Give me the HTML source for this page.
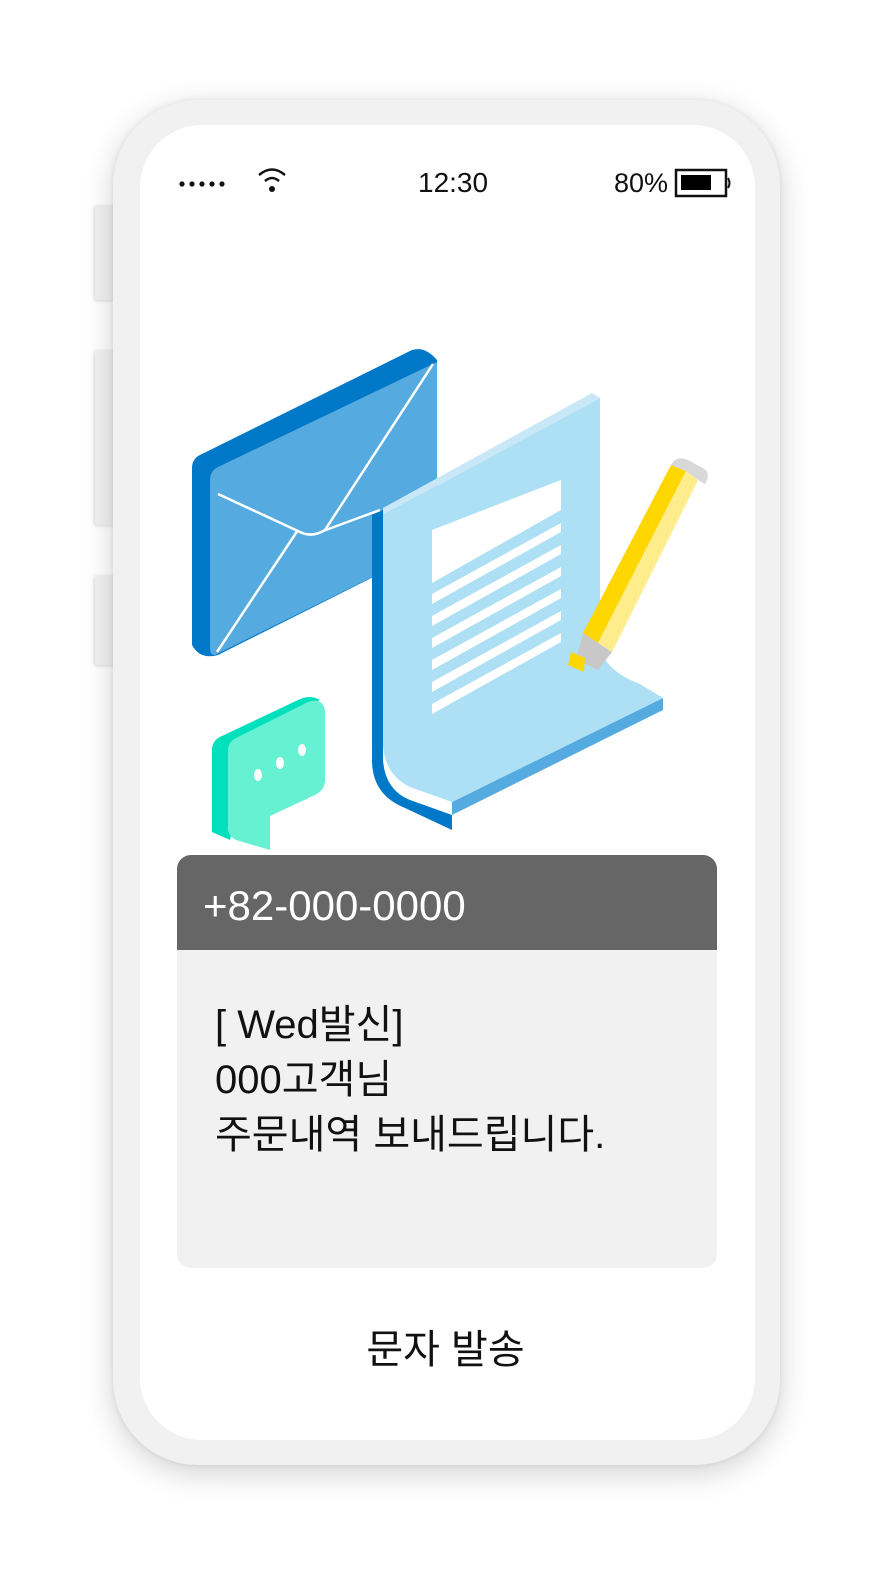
<!DOCTYPE html>
<html><head><meta charset="utf-8"><style>
*{margin:0;padding:0;box-sizing:border-box}
body{width:885px;height:1581px;background:#fff;position:relative;overflow:hidden;font-family:"Liberation Sans","Noto Sans CJK KR",sans-serif}
.abs{position:absolute}
.phone{left:113px;top:100px;width:667px;height:1365px;border-radius:85px;background:#f1f1f1;box-shadow:0 8px 30px rgba(0,0,0,.18),0 0 6px rgba(0,0,0,.08)}
.screen{left:140px;top:125px;width:615px;height:1315px;border-radius:62px;background:#fff}
.btn{left:95px;width:20px;background:#f1f1f1;border-radius:3px 0 0 3px;box-shadow:-1px 1px 3px rgba(0,0,0,.15)}
.t{color:#111}
</style></head><body>
<div class="abs btn" style="top:205px;height:95px"></div>
<div class="abs btn" style="top:350px;height:175px"></div>
<div class="abs btn" style="top:575px;height:90px"></div>
<div class="abs phone"></div>
<div class="abs screen"></div>

<svg class="abs" style="left:175px;top:165px" width="120" height="30">
<g fill="#111"><circle cx="7" cy="19" r="2.6"/><circle cx="17" cy="19" r="2.6"/><circle cx="27" cy="19" r="2.6"/><circle cx="37" cy="19" r="2.6"/><circle cx="47" cy="19" r="2.6"/><circle cx="97" cy="24" r="3"/></g>
<path d="M84 10 Q97 -1 110 10" stroke="#111" stroke-width="2.5" fill="none"/>
<path d="M90 16 Q97 10 104 16" stroke="#111" stroke-width="2.5" fill="none"/>
</svg>
<div class="abs t" style="left:418px;top:168px;font-size:28px;line-height:30px">12:30</div>
<div class="abs t" style="left:614px;top:168px;font-size:27px;line-height:30px">80%</div>
<svg class="abs" style="left:674px;top:168px" width="60" height="30">
<rect x="2" y="2" width="50" height="26" fill="none" stroke="#111" stroke-width="2.5"/>
<rect x="7" y="7" width="30" height="15" fill="#000"/>
<path d="M54 10 Q57 15 54 20" stroke="#111" stroke-width="2" fill="none"/>
</svg>

<svg class="abs" style="left:0;top:0" width="885" height="900">
<path d="M192 468 Q192 458 202 454 L412 350 Q425 346 437 360 L437 545 L218 655 Q200 660 192 645 Z" fill="#0078c8"/>
<path d="M210 480 Q210 470 220 466 L437 362 L437 545 L215 655 Q210 655 210 648 Z" fill="#55aae0"/>
<path d="M218 494 L300 532 Q312 538 325 530 L433 364 M298 530 L217 652 M323 531 L380 510" stroke="#fff" stroke-width="2.5" fill="none"/>
<path d="M372 515 L383 510 L383 760 Q385 790 410 800 L452 815 L452 830 L405 808 Q372 795 372 760 Z" fill="#0078c8"/>
<path d="M452 815 L663 710 L663 698 L452 802 Z" fill="#55aae0"/>
<path d="M383 508 L592 393 L600 398 L383 515 Z" fill="#c8e8f8"/>
<path d="M383 515 L600 398 L600 650 Q608 672 640 684 L663 698 L452 802 L410 787 Q385 775 383 745 Z" fill="#ade0f4"/>
<path d="M432 530 L561 480 L561 510 L432 583 Z" fill="#fff"/>
<g fill="#fff">
<path d="M432 594 L561 523 L561 532 L432 604 Z"/>
<path d="M432 616 L561 545 L561 554 L432 626 Z"/>
<path d="M432 638 L561 567 L561 576 L432 648 Z"/>
<path d="M432 660 L561 589 L561 598 L432 670 Z"/>
<path d="M432 682 L561 611 L561 620 L432 692 Z"/>
<path d="M432 704 L561 633 L561 642 L432 714 Z"/>
</g>
<path d="M583 633 L671 465 L686 471 L598 643 Z" fill="#ffd700"/>
<path d="M598 643 L686 471 L698 480 L612 652 Z" fill="#ffec8c"/>
<path d="M671 465 Q676 455 688 460 L706 470 Q710 476 705 484 L698 480 L686 471 Z" fill="#d8d8d8"/>
<path d="M583 633 L598 643 L612 652 L598 670 L576 660 Z" fill="#c8c8c8"/>
<path d="M571 652 L585 658 L584 672 L568 665 Z" fill="#ffd700"/>
<path d="M212 750 Q212 740 222 736 L298 700 Q310 694 320 700 L255 730 L230 840 L212 832 Z" fill="#00e0bc"/>
<path d="M228 750 Q228 742 236 738 L308 702 Q322 697 325 710 L325 780 Q325 790 315 795 L270 816 L270 850 L236 840 Q228 836 228 828 Z" fill="#66f2d2"/>
<g fill="#fff"><ellipse cx="258" cy="775" rx="4" ry="6"/><ellipse cx="280" cy="763" rx="4" ry="6"/><ellipse cx="302" cy="750" rx="4" ry="6"/></g>
</svg>

<div class="abs" style="left:177px;top:855px;width:540px;height:413px;border-radius:14px;background:#f1f1f1;overflow:hidden">
<div style="height:95px;background:#666;color:#fff;font-size:42px;letter-spacing:0;padding:30px 0 0 26px;line-height:42px">+82-000-0000</div>
<div class="t" style="font-size:40px;letter-spacing:0;line-height:55px;padding:48px 0 0 38px;color:#111">[ Wed발신]<br>000고객님<br>주문내역 보내드립니다.</div>
</div>
<div class="abs t" style="left:0;width:885px;text-align:center;top:1330px;font-size:40px;line-height:40px;letter-spacing:0;padding-left:6px">문자 발송</div>
</body></html>
